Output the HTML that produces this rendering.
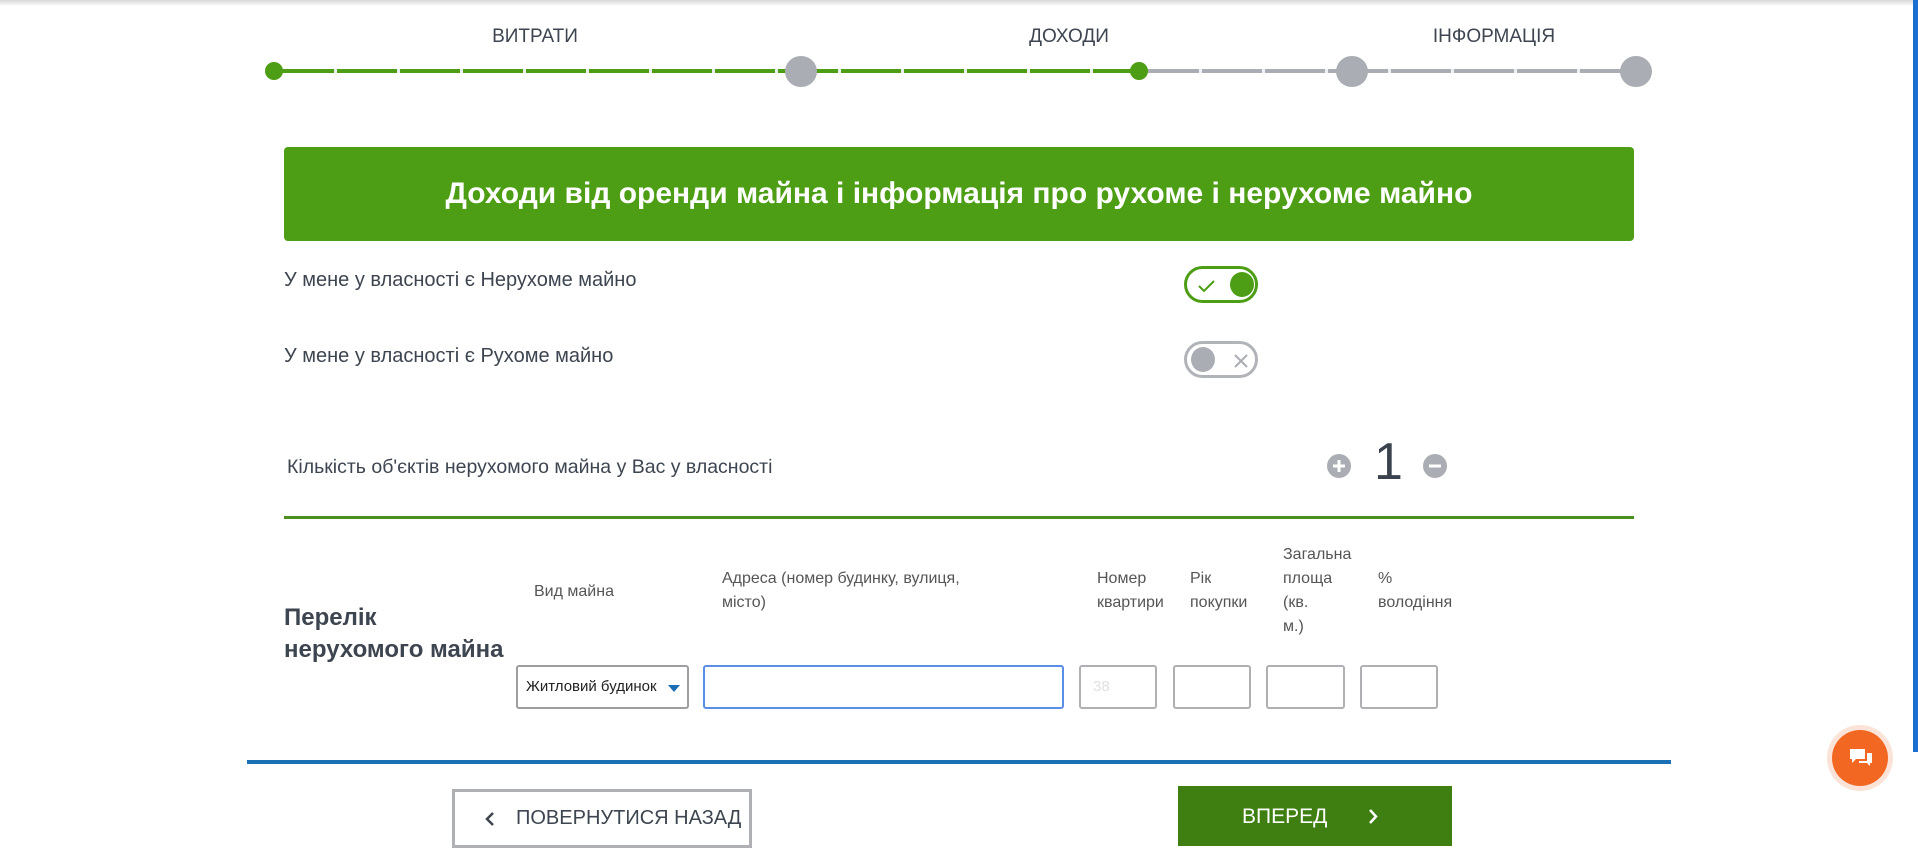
<!DOCTYPE html>
<html><head><meta charset="utf-8"><style>
*{margin:0;padding:0;box-sizing:border-box}
body{width:1918px;height:862px;background:#fff;position:relative;overflow:hidden;font-family:"Liberation Sans",sans-serif;color:#3d4550}
.a{position:absolute}
.lbl{font-size:19px;color:#3d4550;transform:translateX(-50%);white-space:nowrap}
.seg{position:absolute;top:69px;height:4px}
.dot{position:absolute;border-radius:50%}
.txt{font-size:20px;color:#3d4550;white-space:nowrap}
.hd{font-size:16px;color:#555;line-height:24px}
.inp{position:absolute;top:665px;height:44px;border:2px solid #aeb0b3;border-radius:3px;background:#fff}
</style></head><body>
<div class="a" style="left:0;top:0;width:1918px;height:6px;background:linear-gradient(#d8d8d8,#fff)"></div>
<div class="a" style="left:1913px;top:0;width:5px;height:752px;background:#1a6fd0"></div>

<div class="a lbl" style="left:535px;top:26px">ВИТРАТИ</div>
<div class="a lbl" style="left:1069px;top:26px">ДОХОДИ</div>
<div class="a lbl" style="left:1494px;top:26px">ІНФОРМАЦІЯ</div>

<div class="seg" style="left:274px;width:865px;background:repeating-linear-gradient(90deg,#4d9e15 0 60px,#e8eef4 60px 63px)"></div>
<div class="seg" style="left:1139px;width:497px;background:repeating-linear-gradient(90deg,#aaadb3 0 60px,#eef0f3 60px 63px)"></div>
<div class="dot" style="left:265px;top:62px;width:18px;height:18px;background:#4d9e15"></div>
<div class="dot" style="left:785px;top:56px;width:32px;height:31px;background:#aaadb3"></div>
<div class="dot" style="left:1130px;top:62px;width:18px;height:18px;background:#4d9e15"></div>
<div class="dot" style="left:1336px;top:56px;width:32px;height:31px;background:#aaadb3"></div>
<div class="dot" style="left:1620px;top:56px;width:32px;height:31px;background:#aaadb3"></div>

<div class="a" style="left:284px;top:147px;width:1350px;height:94px;background:#4d9e15;border-radius:4px;color:#fff;font-size:30px;font-weight:bold;text-align:center;line-height:94px;white-space:nowrap">Доходи від оренди майна і інформація про рухоме і нерухоме майно</div>

<div class="a txt" style="left:284px;top:269px">У мене у власності є Нерухоме майно</div>
<div class="a txt" style="left:284px;top:345px">У мене у власності є Рухоме майно</div>

<div class="a" style="left:1184px;top:266px;width:74px;height:37px;border:3px solid #4d9e15;border-radius:19px">
<svg class="a" style="left:10px;top:9px" width="20" height="16" viewBox="0 0 20 16"><path d="M2 8 L7 13 L17 3" fill="none" stroke="#4d9e15" stroke-width="2"/></svg>
<div class="dot" style="left:43px;top:3px;width:24px;height:25px;background:#4d9e15"></div></div>
<div class="a" style="left:1184px;top:341px;width:74px;height:37px;border:3px solid #b0b3b8;border-radius:19px">
<div class="dot" style="left:4px;top:3px;width:24px;height:25px;background:#aaadb3"></div>
<svg class="a" style="left:46px;top:9px" width="16" height="16" viewBox="0 0 16 16"><path d="M2 2 L14 14 M14 2 L2 14" stroke="#aaadb3" stroke-width="2"/></svg></div>

<div class="a txt" style="left:287px;top:456px;font-size:19.5px">Кількість об'єктів нерухомого майна у Вас у власності</div>
<div class="dot" style="left:1327px;top:454px;width:24px;height:24px;background:#aaadb3"><svg width="24" height="24"><path d="M12 6v12M6 12h12" stroke="#fff" stroke-width="3"/></svg></div>
<div class="a" style="left:1374px;top:432px;font-size:52px;color:#3a424d">1</div>
<div class="dot" style="left:1423px;top:454px;width:24px;height:24px;background:#aaadb3"><svg width="24" height="24"><path d="M6 12h12" stroke="#fff" stroke-width="3"/></svg></div>

<div class="a" style="left:284px;top:516px;width:1350px;height:3px;background:#4d8f1e"></div>

<div class="a hd" style="left:534px;top:580px">Вид майна</div>
<div class="a hd" style="left:722px;top:567px">Адреса (номер будинку, вулиця,<br>місто)</div>
<div class="a hd" style="left:1097px;top:567px">Номер<br>квартири</div>
<div class="a hd" style="left:1190px;top:567px">Рік<br>покупки</div>
<div class="a hd" style="left:1283px;top:543px">Загальна<br>площа<br>(кв.<br>м.)</div>
<div class="a hd" style="left:1378px;top:567px">%<br>володіння</div>
<div class="a" style="left:284px;top:602px;font-size:24px;font-weight:bold;color:#3d4550;line-height:32px">Перелік<br>нерухомого майна</div>

<div class="inp" style="left:516px;width:173px;border-color:#9c9ea1"><span class="a" style="left:8px;top:11px;font-size:15px;color:#222;white-space:nowrap;width:137px;overflow:hidden">Житловий будинок</span><svg class="a" style="left:150px;top:18px" width="12" height="8"><path d="M0 0h12L6 7z" fill="#1a6fb5"/></svg></div>
<div class="inp" style="left:703px;width:361px;border:2px solid #5b8ee6"></div>
<div class="inp" style="left:1079px;width:78px"><span class="a" style="left:12px;top:11px;font-size:15px;color:#e0e0e0">38</span></div>
<div class="inp" style="left:1173px;width:78px"></div>
<div class="inp" style="left:1266px;width:79px"></div>
<div class="inp" style="left:1360px;width:78px"></div>

<div class="a" style="left:247px;top:760px;width:1424px;height:4px;background:#1a6fb5"></div>

<div class="a" style="left:452px;top:789px;width:300px;height:59px;border:3px solid #aeb0b3;font-size:20px;color:#3d4550;line-height:53px;padding-left:61px;white-space:nowrap">
<svg class="a" style="left:30px;top:20px" width="10" height="14"><path d="M8 1L2 7l6 6" fill="none" stroke="#3d4550" stroke-width="2.5"/></svg>ПОВЕРНУТИСЯ НАЗАД</div>
<div class="a" style="left:1178px;top:786px;width:274px;height:60px;background:#3f7f11;color:#fff;font-size:21px;line-height:62px;padding-left:64px">ВПЕРЕД
<svg class="a" style="left:190px;top:23px" width="10" height="15"><path d="M2 1l6 6.5L2 14" fill="none" stroke="#fff" stroke-width="2.5"/></svg></div>

<div class="dot" style="left:1827px;top:725px;width:66px;height:66px;background:#fbe3d8"></div>
<div class="dot" style="left:1832px;top:730px;width:56px;height:56px;background:#f26722"><svg class="a" style="left:16px;top:17px" width="26" height="24" viewBox="0 0 26 24"><path d="M2 2h15v10H8l-4 4v-4H2z" fill="#fff"/><path d="M19 6h5v10h-2v3l-3-3h-8v-2h8z" fill="#fff"/></svg></div>
</body></html>
